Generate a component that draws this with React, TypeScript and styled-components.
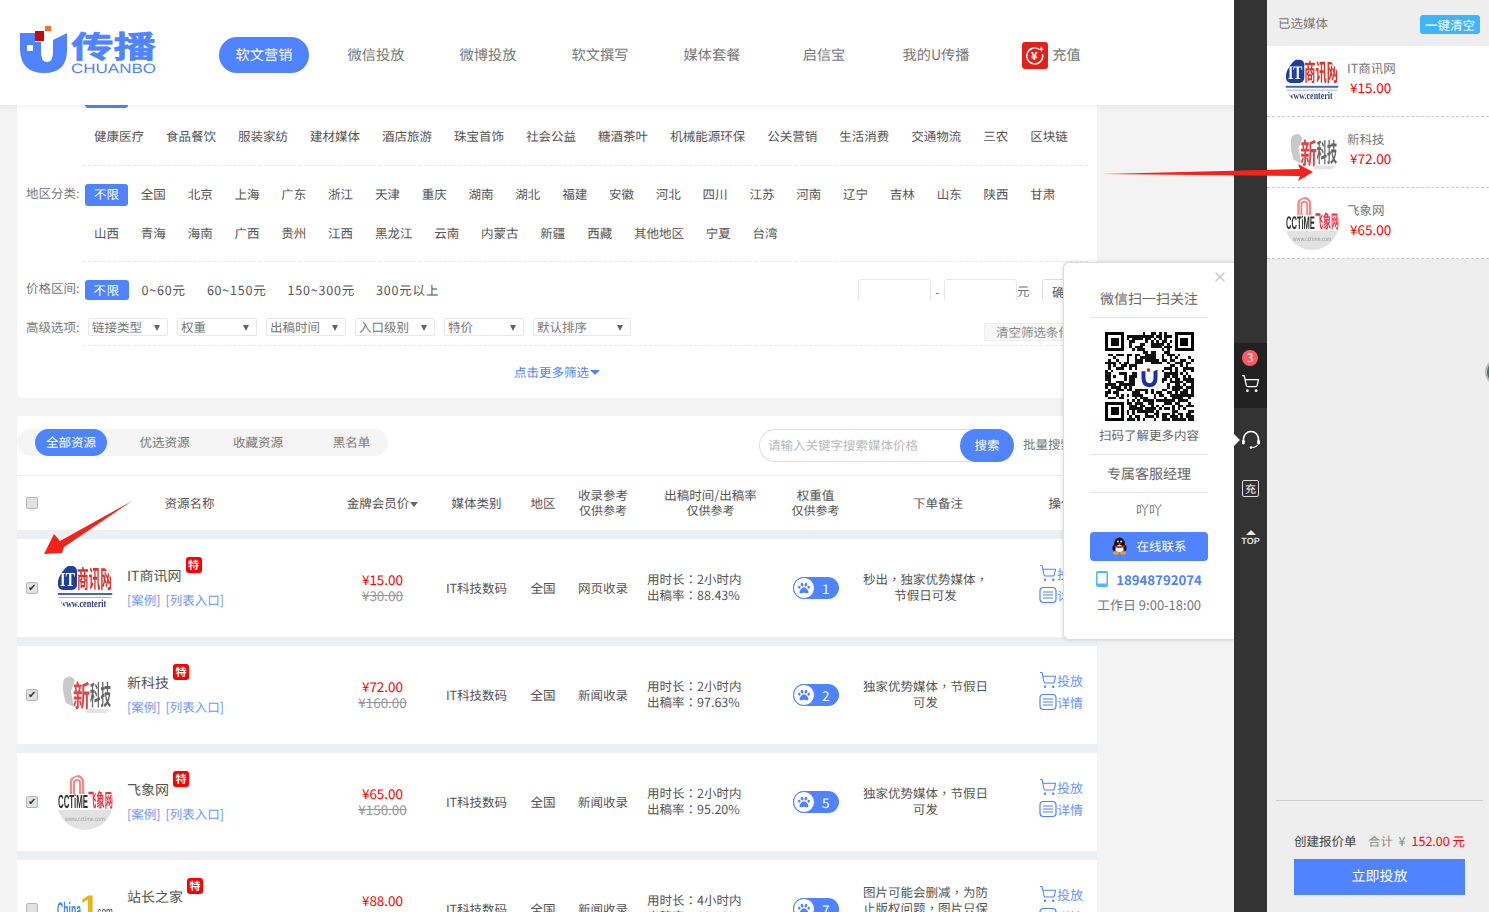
import React from "react";
import styled, { createGlobalStyle } from "styled-components";
import { ShoppingCart, X } from "lucide-react";
import { FaPaw } from "react-icons/fa";

const BLUE = "#5083ff";

const GlobalStyle = createGlobalStyle`
  html, body {
    margin: 0;
    padding: 0;
    height: 100%;
    overflow: hidden;
    background: #f3f3f4;
    font-family: "Noto Sans CJK SC", "Noto Sans", sans-serif;
    font-size: 12.5px;
    color: #555;
    text-rendering: geometricPrecision;
  }
  * { box-sizing: border-box; }
`;

const Page = styled.div`
  position: relative;
  display: flex;
  width: 1489px;
  height: 912px;
  overflow: hidden;
`;

const Main = styled.div`
  position: relative;
  width: 1234px;
  height: 912px;
  overflow: hidden;
`;

/* ---- header ---- */
const Header = styled.header`
  position: relative;
  z-index: 5;
  display: flex;
  align-items: center;
  height: 105px;
  padding-left: 20px;
  background: #fff;
  box-shadow: 0 2px 6px rgba(0, 0, 0, 0.06);
`;

const LogoSvg = styled.svg`
  flex: none;
  width: 199px;
  height: 105px;
`;

const Nav = styled.nav`
  display: flex;
  gap: 22px;
  margin-top: 5px;
`;

const NavItem = styled.a<{ $active?: boolean }>`
  display: flex;
  align-items: center;
  justify-content: center;
  gap: 4px;
  width: 90px;
  height: 36px;
  border-radius: 18px;
  font-size: 14.2px;
  color: ${(p) => (p.$active ? "#fff" : "#777")};
  background: ${(p) => (p.$active ? BLUE : "transparent")};
`;

const RechargeNav = styled(NavItem)`
  padding-left: 7px;
`;

const RechargeIcon = styled.svg`
  flex: none;
  width: 26px;
  height: 27px;
`;

/* ---- filter card ---- */
const Content = styled.div`
  width: 1080px;
  margin-left: 17px;
`;

const FilterCard = styled.section`
  height: 293px;
  background: #fff;
  border-radius: 0 0 6px 6px;
`;

const CutTag = styled.div`
  width: 43px;
  height: 3px;
  margin-left: 68px;
  background: ${BLUE};
  border-radius: 0 0 3px 3px;
`;

const FilterGroup = styled.div<{ $top: number }>`
  display: flex;
  padding-left: 9px;
  margin-top: ${(p) => p.$top}px;
`;

const FilterLabel = styled.div`
  flex: none;
  width: 59px;
  height: 18px;
  line-height: 18px;
  color: #777;
  white-space: nowrap;
`;

const Options = styled.div`
  display: flex;
  flex-wrap: wrap;
  row-gap: 17px;
  flex: 1;
`;

const Option = styled.a<{ $active?: boolean }>`
  height: 22px;
  line-height: 21px;
  padding: 0 9px;
  margin-right: 4px;
  border-radius: 3px;
  white-space: nowrap;
  color: ${(p) => (p.$active ? "#fff" : "#555")};
  background: ${(p) => (p.$active ? BLUE : "transparent")};
`;

const RegionOption = styled(Option)`
  line-height: 20px;
  margin-right: 3.8px;
`;

const Dashed = styled.div<{ $top: number }>`
  height: 1px;
  margin: ${(p) => p.$top}px 9px 0 66px;
  border-top: 1px dashed #e8e8e8;
`;

const PriceRow = styled.div`
  display: flex;
  height: 21px;
  overflow: hidden;
  margin-top: 17px;
  padding-left: 9px;
  padding-right: 7px;
`;

const PriceOption = styled(Option)`
  align-self: flex-end;
  height: 20px;
  line-height: 20px;
  letter-spacing: 0.8px;
  padding: 0 ${(p) => (p.$active ? 8.5 : 10)}px;
  margin-right: ${(p) => (p.$active ? 3 : 1)}px;
`;

const PriceSide = styled.div`
  display: flex;
  margin-left: auto;
  color: #777;
`;

const PriceInput = styled.div`
  width: 73px;
  height: 30px;
  border: 1px solid #e8e8e8;
  border-radius: 3px;
`;

const PriceSep = styled.span`
  width: 13px;
  line-height: 26px;
  text-align: center;
`;

const PriceUnit = styled.span`
  width: 25px;
  line-height: 24px;
`;

const PriceButton = styled.div`
  width: 48px;
  height: 30px;
  padding-left: 9px;
  line-height: 24px;
  color: #555;
  border: 1px solid #ddd;
  border-radius: 3px;
`;

const AdvancedRow = styled.div`
  display: flex;
  height: 18px;
  margin-top: 18px;
  padding-left: 9px;
`;

const SelectList = styled.div`
  display: flex;
  flex: 1;
  gap: 9px;
  margin-left: 3px;
`;

const SelectBox = styled.div<{ $wide?: boolean }>`
  position: relative;
  width: ${(p) => (p.$wide ? 98 : 80)}px;
  height: 18px;
  line-height: 15px;
  padding-left: 3px;
  color: #777;
  border: 1px solid #e8e8e8;
  border-radius: 2px;
  &::after {
    content: "";
    position: absolute;
    right: 7px;
    top: 6px;
    border: 3.5px solid transparent;
    border-top: 6px solid #666;
    border-bottom: 0;
  }
`;

const ClearButton = styled.div`
  height: 18px;
  margin: 5px 14px 0 0;
  padding: 0 11px;
  line-height: 16px;
  white-space: nowrap;
  color: #888;
  background: #f7f7f7;
  border: 1px solid #eee;
  border-radius: 2px;
`;

const MoreLink = styled.div`
  display: flex;
  align-items: center;
  justify-content: center;
  height: 50px;
  color: ${BLUE};
  &::after {
    content: "";
    margin: 2px 0 0 1px;
    border: 5px solid transparent;
    border-top: 5px solid ${BLUE};
    border-bottom: 0;
  }
`;

/* ---- table ---- */
const TableCard = styled.section`
  margin-top: 18px;
  background: #edf0f3;
`;

const Toolbar = styled.div`
  display: flex;
  align-items: flex-start;
  height: 60px;
  padding-top: 13px;
  background: #fff;
  border-bottom: 1px solid #eee;
`;

const Pills = styled.div`
  display: flex;
  gap: 21.5px;
  height: 27px;
  padding-left: 18px;
  background: #f5f5f5;
  border-radius: 14px;
`;

const Pill = styled.a<{ $active?: boolean }>`
  width: 72px;
  line-height: 26px;
  text-align: center;
  border-radius: 14px;
  color: ${(p) => (p.$active ? "#fff" : "#777")};
  background: ${(p) => (p.$active ? BLUE : "transparent")};
`;

const SearchBox = styled.div`
  display: flex;
  align-items: center;
  justify-content: space-between;
  width: 255px;
  height: 33px;
  margin-left: auto;
  padding: 0 0 2px 8px;
  color: #bbb;
  border: 1px solid #ddd;
  border-right: 0;
  border-radius: 17px;
`;

const SearchButton = styled.div`
  align-self: flex-start;
  width: 54px;
  height: 33px;
  margin-top: -1px;
  line-height: 31px;
  text-align: center;
  color: #fff;
  background: ${BLUE};
  border-radius: 17px;
`;

const BatchSearch = styled.div`
  width: 83px;
  padding-left: 9px;
  line-height: 30px;
  color: #777;
`;

const gridColumns = "30px 285px 101px 87px 46px 74px 128px 95px 150px 84px";

const TableHead = styled.div`
  display: grid;
  grid-template-columns: ${gridColumns};
  align-items: center;
  height: 54px;
  background: #fff;
`;

const HeadCell = styled.div<{ $shift?: number }>`
  padding-left: ${(p) => p.$shift ?? 0}px;
  text-align: center;
  white-space: nowrap;
  line-height: 16px;
  color: #555;
`;

const HeadSub = styled.div`
  font-size: 12px;
`;

const SortCaret = styled.span`
  display: inline-block;
  margin-left: 1px;
  vertical-align: 1px;
  border: 4px solid transparent;
  border-top: 5px solid #666;
  border-bottom: 0;
`;

const Row = styled.div`
  display: grid;
  grid-template-columns: ${gridColumns};
  align-items: center;
  height: 98px;
  margin-top: 9px;
  background: #fff;
`;

const Check = styled.input.attrs({ type: "checkbox" })`
  appearance: none;
  position: relative;
  justify-self: center;
  width: 12px;
  height: 12px;
  margin: 0;
  background: #e2e2e2;
  border: 1px solid #b5b5b5;
  border-radius: 2px;
  &:checked::after {
    content: "✔";
    position: absolute;
    left: 1px;
    top: -3px;
    font-size: 10px;
    line-height: 16px;
    color: #333;
  }
`;

const ResourceCell = styled.div`
  display: flex;
  align-items: center;
  gap: 14px;
  padding-left: 10px;
`;

const LogoImage = styled.svg<{ $size: number }>`
  flex: none;
  width: ${(p) => p.$size}px;
  height: ${(p) => p.$size}px;
  border-radius: 50%;
  filter: blur(0.5px);
`;

const ResourceInfo = styled.div`
  display: flex;
  flex-direction: column;
  gap: 6px;
  line-height: 18px;
`;

const NameWrap = styled.div`
  position: relative;
  align-self: flex-start;
  font-size: 14px;
  color: #555;
`;

const SpecialBadge = styled.span`
  position: absolute;
  left: calc(100% + 4px);
  top: -10px;
  width: 16px;
  height: 16px;
  line-height: 16px;
  font-size: 11px;
  font-weight: 700;
  text-align: center;
  color: #fff;
  background: #f00;
  border-radius: 3px;
`;

const LinkRow = styled.div`
  display: flex;
  gap: 5px;
  color: #6c97ff;
`;

const PriceCell = styled.div`
  padding-bottom: 2px;
  text-align: center;
  line-height: 16px;
`;

const PriceNow = styled.div`
  font-size: 13.5px;
  color: #f00;
`;

const PriceOld = styled.div`
  font-size: 13.5px;
  color: #999;
  text-decoration: line-through;
`;

const TextCell = styled.div`
  padding-bottom: 2px;
  text-align: center;
`;

const TimeCell = styled.div`
  padding: 0 0 2px 7px;
  line-height: 16px;
  white-space: nowrap;
`;

const WeightPill = styled.div`
  display: flex;
  align-items: center;
  justify-self: center;
  width: 46px;
  height: 22px;
  padding-right: 9px;
  color: #fff;
  font-size: 13.5px;
  background: ${BLUE};
  border-radius: 11px;
`;

const PawCircle = styled.span`
  display: flex;
  align-items: center;
  justify-content: center;
  width: 22px;
  height: 22px;
  margin-right: auto;
  color: ${BLUE};
  background: #fff;
  border: 1px solid ${BLUE};
  border-radius: 50%;
`;

const NoteCell = styled.div`
  width: 127px;
  margin-left: -1px;
  padding-bottom: 2px;
  text-align: center;
  line-height: 16px;
`;

// the full-width comma and colon sit mid-cell in the reference
const Punct = styled.span`
  font-family: "Noto Sans CJK TC", sans-serif;
`;

const OpCell = styled.div`
  display: flex;
  flex-direction: column;
  gap: 4px;
  padding: 0 0 8px 26px;
`;

const OpLink = styled.a`
  display: flex;
  align-items: center;
  height: 18px;
  color: #6c97ff;
  font-size: 13px;
  white-space: nowrap;
  svg {
    flex: none;
    width: 18px;
    height: 18px;
  }
`;

/* ---- popover ---- */
const Popover = styled.aside`
  position: absolute;
  z-index: 6;
  left: 1063px;
  top: 262px;
  display: flex;
  flex-direction: column;
  align-items: center;
  width: 171px;
  height: 378px;
  padding: 18px 26px 0;
  background: #fff;
  border: 1px solid #ddd;
  border-right: 0;
  border-radius: 6px 0 0 6px;
  box-shadow: 0 0 4px rgba(0, 0, 0, 0.15);
`;

const CloseButton = styled.span`
  position: absolute;
  right: 6px;
  top: 6px;
  color: #ccc;
  display: flex;
`;

const PopTitle = styled.div<{ $h: number }>`
  flex: none;
  width: 100%;
  height: ${(p) => p.$h}px;
  line-height: ${(p) => p.$h}px;
  font-size: 14px;
  text-align: center;
  white-space: nowrap;
  color: #666;
  border-bottom: 1px solid #e5e5e5;
`;

const QrSvg = styled.svg`
  flex: none;
  width: 99px;
  height: 99px;
  margin-top: 9px;
`;

const PopCaption = styled.div`
  flex: none;
  height: 29px;
  width: 100%;
  line-height: 18px;
  text-align: center;
  white-space: nowrap;
  color: #666;
  border-bottom: 1px solid #e5e5e5;
`;

const PopName = styled.div`
  flex: none;
  height: 34px;
  line-height: 34px;
  font-size: 13px;
  color: #777;
`;

const ContactButton = styled.div`
  display: flex;
  align-items: center;
  justify-content: center;
  gap: 8px;
  flex: none;
  width: 100%;
  height: 29px;
  margin-top: 5px;
  padding-bottom: 2px;
  color: #fff;
  background: ${BLUE};
  border-radius: 4px;
`;

const PhoneLine = styled.div`
  display: flex;
  align-items: center;
  gap: 8px;
  flex: none;
  height: 36px;
  font-size: 13.2px;
  font-weight: 700;
  color: ${BLUE};
`;

const WorkTime = styled.div`
  line-height: 16px;
  font-size: 13px;
  white-space: nowrap;
  color: #777;
`;

/* ---- dark rail ---- */
const Rail = styled.div`
  display: flex;
  flex-direction: column;
  align-items: center;
  flex: none;
  width: 33px;
  height: 912px;
  padding-top: 343px;
  color: #fff;
  background: #333;
`;

const CartBlock = styled.div`
  position: relative;
  display: flex;
  flex-direction: column;
  align-items: center;
  width: 100%;
  height: 65px;
  padding-top: 31px;
  background: #222;
`;

const CountBadge = styled.span`
  position: absolute;
  top: 7px;
  left: 8px;
  width: 16px;
  height: 16px;
  line-height: 16px;
  font-size: 12px;
  text-align: center;
  border-radius: 50%;
  background: #ff5a5f;
`;

const HeadsetItem = styled.div`
  position: relative;
  display: flex;
  align-items: center;
  justify-content: center;
  width: 100%;
  height: 64px;
  &::before {
    content: "";
    position: absolute;
    left: 0;
    top: 26px;
    border: 6px solid transparent;
    border-left: 6px solid #fff;
    border-right: 0;
  }
`;

const ChargeItem = styled.div`
  display: flex;
  align-items: center;
  justify-content: center;
  width: 17px;
  height: 17px;
  margin-top: 8px;
  font-size: 11px;
  border: 1px solid #ddd;
  border-radius: 2px;
`;

const TopItem = styled.div`
  display: flex;
  flex-direction: column;
  align-items: center;
  gap: 2px;
  margin-top: 33px;
  font-family: "Liberation Sans", sans-serif;
  font-size: 9px;
  font-weight: 700;
  line-height: 9px;
  color: #ddd;
  &::before {
    content: "";
    border: 5px solid transparent;
    border-bottom: 5px solid #eee;
    border-top: 0;
  }
`;

/* ---- right panel ---- */
const Panel = styled.aside`
  position: relative;
  display: flex;
  flex-direction: column;
  flex: none;
  width: 222px;
  height: 912px;
  background: #eee;
`;

const PanelHead = styled.div`
  display: flex;
  align-items: center;
  justify-content: space-between;
  height: 46px;
  padding: 0 9px 2px 11px;
  color: #777;
`;

const ClearAll = styled.span`
  width: 60px;
  height: 19px;
  margin-top: 4px;
  line-height: 19px;
  text-align: center;
  color: #fff;
  background: #3fb4ff;
  border-radius: 3px;
`;

const PanelItem = styled.div`
  display: flex;
  align-items: center;
  gap: 8px;
  height: 71px;
  padding-left: 18px;
  background: #fff;
  border-bottom: 1px dashed #ccc;
`;

const PanelText = styled.div`
  padding-bottom: 7px;
`;

const PanelName = styled.div`
  line-height: 18px;
  color: #777;
`;

const PanelPrice = styled.div`
  margin-top: 1px;
  padding-left: 3px;
  line-height: 18px;
  font-size: 13.5px;
  color: #f00;
`;

const PanelFooter = styled.div`
  margin: auto 6px 17px 9px;
  padding: 31px 18px 0;
  border-top: 1px solid #ccc;
`;

const Summary = styled.div`
  display: flex;
  height: 27px;
  white-space: nowrap;
  color: #888;
  line-height: 18px;
`;

const SummaryLabel = styled.span`
  width: 74px;
  color: #444;
`;

const SummaryTotal = styled.span`
  margin-left: 6px;
  color: #f00;
`;

const SubmitButton = styled.div`
  height: 36px;
  width: 171px;
  line-height: 35px;
  text-align: center;
  font-size: 14px;
  color: #fff;
  background: ${BLUE};
`;

const EdgeCircle = styled.span`
  position: absolute;
  left: 218px;
  top: 358px;
  width: 28px;
  height: 28px;
  background: #17896c;
  border: 2px solid #bbb;
  border-radius: 50%;
`;

const ArrowLayer = styled.svg`
  position: absolute;
  z-index: 9;
  left: 0;
  top: 0;
  width: 1489px;
  height: 912px;
  pointer-events: none;
`;

/* ---- drawings ---- */
const BrandLogo = () => (
  <LogoSvg viewBox="0 0 199 105">
    <path
      d="M0 33H15V42H21V52Q21 62 27 62T33 52V40L47 33V50Q47 73 24 73T0 50Z"
      fill="#5083ff"
    />
    <rect x="7" y="45" width="6" height="6" fill="#fff" />
    <rect x="15" y="31" width="9" height="10" fill="#c40a0a" />
    <rect x="25" y="26" width="6" height="5" fill="#f0701e" />
    <text
      x="51"
      y="58"
      fill="#5083ff"
      stroke="#5083ff"
      strokeWidth="0.6"
      fontSize="31"
      fontWeight="700"
      textLength="85"
      lengthAdjust="spacingAndGlyphs"
    >
      传播
    </text>
    <text
      x="51"
      y="73"
      fill="#5083ff"
      fontFamily="Liberation Sans"
      fontSize="13.5"
      textLength="85"
      lengthAdjust="spacingAndGlyphs"
    >
      CHUANBO
    </text>
  </LogoSvg>
);

const Recharge = () => (
  <RechargeIcon viewBox="0 0 26 27">
    <rect width="26" height="27" rx="3" fill="#e0231a" />
    <path
      d="M17.5 7.5A8 8 0 1 0 20.5 12"
      fill="none"
      stroke="#fff"
      strokeWidth="1.4"
    />
    <path d="M19 4l1 2.5 2 .5-2 1-.5 2-1-2-2-.5 2-1z" fill="#fff" />
    <text x="9" y="18" fill="#fff" fontSize="11" fontWeight="700">
      ¥
    </text>
  </RechargeIcon>
);

const ItLogo = ({ size }: { size: number }) => (
  <LogoImage $size={size} viewBox="0 0 56 56">
    <rect width="56" height="56" fill="#fff" />
    <rect x="1" y="6" width="19" height="24" rx="5" fill="#1f3f9e" />
    <text x="3" y="26" fill="#fff" fontSize="20" fontWeight="700" fontFamily="Liberation Serif" textLength="15" lengthAdjust="spacingAndGlyphs">
      IT
    </text>
    <text x="20" y="28" fill="#d9352e" fontSize="25" fontWeight="700" textLength="35" lengthAdjust="spacingAndGlyphs">
      商讯网
    </text>
    <rect x="0" y="33" width="56" height="2" fill="#4466b5" />
    <rect x="0" y="37" width="56" height="1" fill="#9fb2dd" />
    <text x="3" y="47" fill="#2d3f80" fontSize="11" fontWeight="700" fontFamily="Liberation Serif" textLength="52" lengthAdjust="spacingAndGlyphs">
      www.centerit.c
    </text>
  </LogoImage>
);

const TechLogo = ({ size }: { size: number }) => (
  <LogoImage $size={size} viewBox="0 0 56 56">
    <rect width="56" height="56" fill="#fff" />
    <path d="M7 12Q14 6 18 14L14 24L17 40L9 36Q4 22 7 12Z" fill="#c9c9c9" />
    <text x="16" y="40" fill="#d9474a" fontSize="30" fontWeight="700" textLength="17" lengthAdjust="spacingAndGlyphs">
      新
    </text>
    <text x="33" y="38" fill="#666" fontSize="27" fontWeight="700" textLength="21" lengthAdjust="spacingAndGlyphs">
      科技
    </text>
    <rect x="30" y="42" width="22" height="4" fill="#e3e3e3" />
  </LogoImage>
);

const CctimeLogo = ({ size }: { size: number }) => (
  <LogoImage $size={size} viewBox="0 0 56 56">
    <rect width="56" height="56" fill="#fff" />
    <rect x="0" y="36" width="56" height="20" fill="#e2e2e2" />
    <path d="M14 20V8A6 6 0 0 1 26 8V20" fill="none" stroke="#ef8d8d" strokeWidth="2.5" />
    <path d="M17 20V9A3 3 0 0 1 23 9V20" fill="none" stroke="#ef8d8d" strokeWidth="2" />
    <text x="1" y="34" fill="#333" fontSize="19" fontWeight="700" fontFamily="Liberation Sans" textLength="30" lengthAdjust="spacingAndGlyphs">
      CCTiME
    </text>
    <text x="31" y="33" fill="#ee3344" fontSize="19" fontWeight="700" textLength="25" lengthAdjust="spacingAndGlyphs">
      飞象网
    </text>
    <text x="8" y="47" fill="#999" fontSize="6" textLength="40" lengthAdjust="spacingAndGlyphs">
      www.cctime.com
    </text>
  </LogoImage>
);

const ChinaLogo = ({ size }: { size: number }) => (
  <LogoImage $size={size} viewBox="0 0 56 56">
    <rect width="56" height="56" fill="#fff" />
    <text x="0" y="36" fill="#3a8be8" fontSize="21" fontWeight="700" fontFamily="Liberation Sans" textLength="24" lengthAdjust="spacingAndGlyphs">
      China
    </text>
    <text x="23" y="38" fill="#e6b420" fontSize="34" fontWeight="700" fontFamily="Liberation Sans">
      1
    </text>
    <text x="38" y="36" fill="#555" fontSize="15" fontFamily="Liberation Sans" textLength="18" lengthAdjust="spacingAndGlyphs">
      .com
    </text>
  </LogoImage>
);

const QR_SIZE = 33;

const isFinder = (x: number, y: number) =>
  (x < 8 && y < 8) || (x >= QR_SIZE - 8 && y < 8) || (x < 8 && y >= QR_SIZE - 8);

// pseudo random modules, stable between renders
const qrModules = () => {
  const cells: [number, number][] = [];
  let seed = 20747;
  for (let y = 0; y < QR_SIZE; y++) {
    for (let x = 0; x < QR_SIZE; x++) {
      seed = (seed * 1103515245 + 12345) & 0x7fffffff;
      if (!isFinder(x, y) && (seed >> 16) % 100 < 52) cells.push([x, y]);
    }
  }
  return cells;
};

const Finder = ({ x, y }: { x: number; y: number }) => (
  <g>
    <rect x={x} y={y} width="7" height="7" fill="#000" />
    <rect x={x + 1} y={y + 1} width="5" height="5" fill="#fff" />
    <rect x={x + 2} y={y + 2} width="3" height="3" fill="#000" />
  </g>
);

const QrCode = () => (
  <QrSvg viewBox="-2 -2 37 37" shapeRendering="crispEdges">
    <rect x="-2" y="-2" width="37" height="37" fill="#fff" />
    {qrModules().map(([x, y]) => (
      <rect key={`${x}-${y}`} x={x} y={y} width="1" height="1" fill="#111" />
    ))}
    <Finder x={0} y={0} />
    <Finder x={QR_SIZE - 7} y={0} />
    <Finder x={0} y={QR_SIZE - 7} />
    <rect x="12" y="12" width="9" height="9" rx="1" fill="#fff" />
    <g shapeRendering="auto">
      <path
        d="M13.5 14.5h1.5v2.5q0 2 1.5 2t1.5-2v-2.500l1.500-.5v3q0 3.500-3 3.500t-3-3.500z"
        fill="#1a2fa8"
      />
      <rect x="15.500" y="13.500" width="1.200" height="1.200" fill="#d02020" />
    </g>
  </QrSvg>
);

const DetailIcon = () => (
  <svg viewBox="0 0 18 18" fill="none" stroke={BLUE} strokeWidth="1.2">
    <rect x="1" y="1.500" width="16" height="15" rx="3.500" />
    <path d="M4 6h10M4 9h10M4 12h10" />
  </svg>
);

const Penguin = () => (
  <svg width="17" height="18" viewBox="0 0 17 18">
    <ellipse cx="8.500" cy="7.500" rx="5.500" ry="7" fill="#111" />
    <ellipse cx="3" cy="11" rx="1.500" ry="3" fill="#111" />
    <ellipse cx="14" cy="11" rx="1.500" ry="3" fill="#111" />
    <ellipse cx="8.500" cy="11.500" rx="4" ry="3.500" fill="#fff" />
    <path d="M3.500 8Q8.500 10.500 13.500 8V10Q8.500 12 3.500 10z" fill="#d81e1e" />
    <circle cx="6.800" cy="4.500" r="1" fill="#fff" />
    <circle cx="10.200" cy="4.500" r="1" fill="#fff" />
    <path d="M7 6.500h3L8.500 8z" fill="#f0a020" />
    <ellipse cx="5" cy="16" rx="3" ry="1.500" fill="#f0a020" />
    <ellipse cx="12" cy="16" rx="3" ry="1.500" fill="#f0a020" />
  </svg>
);

const PhoneIcon = () => (
  <svg width="12" height="16" viewBox="0 0 12 16">
    <rect width="12" height="16" rx="2" fill="#4db8ff" />
    <rect x="1.500" y="2" width="9" height="10.500" fill="#fff" />
  </svg>
);

const Headset = () => (
  <svg width="20" height="20" viewBox="0 0 20 20" fill="none" stroke="#fff">
    <path d="M2.500 11V9A7.500 7.500 0 0 1 17.500 9V11" strokeWidth="1.600" />
    <rect x="1" y="10" width="2.800" height="4.500" rx="1.200" fill="#fff" strokeWidth="0" />
    <rect x="16.200" y="10" width="2.800" height="4.500" rx="1.200" fill="#fff" strokeWidth="0" />
    <path d="M16.500 15Q15 17.500 11 17.500" strokeWidth="1.200" />
    <circle cx="10" cy="17.500" r="1.300" fill="#fff" strokeWidth="0" />
  </svg>
);

/* ---- data ---- */
const categories = ["健康医疗", "食品餐饮", "服装家纺", "建材媒体", "酒店旅游", "珠宝首饰", "社会公益", "糖酒茶叶", "机械能源环保", "公关营销", "生活消费", "交通物流", "三农", "区块链"];
const regions = ["全国", "北京", "上海", "广东", "浙江", "天津", "重庆", "湖南", "湖北", "福建", "安徽", "河北", "四川", "江苏", "河南", "辽宁", "吉林", "山东", "陕西", "甘肃", "山西", "青海", "海南", "广西", "贵州", "江西", "黑龙江", "云南", "内蒙古", "新疆", "西藏", "其他地区", "宁夏", "台湾"];
const navItems = ["软文营销", "微信投放", "微博投放", "软文撰写", "媒体套餐", "启信宝", "我的U传播"];
const advanced = ["链接类型", "权重", "出稿时间", "入口级别", "特价"];

const rows = [
  { name: "IT商讯网", Logo: ItLogo, now: "15.00", old: "30.00", kind: "网页收录", hours: "2", rate: "88.43%", weight: 1, note: "秒出，独家优势媒体，节假日可发", checked: true },
  { name: "新科技", Logo: TechLogo, now: "72.00", old: "160.00", kind: "新闻收录", hours: "2", rate: "97.63%", weight: 2, note: "独家优势媒体，节假日可发", checked: true },
  { name: "飞象网", Logo: CctimeLogo, now: "65.00", old: "150.00", kind: "新闻收录", hours: "2", rate: "95.20%", weight: 5, note: "独家优势媒体，节假日可发", checked: true },
  { name: "站长之家", Logo: ChinaLogo, now: "88.00", old: "180.00", kind: "新闻收录", hours: "4", rate: "90.10%", weight: 7, note: "图片可能会删减，为防止版权问题，图片只保留一张", checked: false },
];

// wrap full-width punctuation so that it takes the mid-cell glyph
const withPunct = (text: string) =>
  text.split(/([，：])/).map((part, i) =>
    part === "，" || part === "：" ? <Punct key={i}>{part}</Punct> : part
  );

const App: React.FC = () => {
  return (
    <Page>
      <GlobalStyle />
      <Main>
        <Header>
          <BrandLogo />
          <Nav>
            {navItems.map((item, i) => (
              <NavItem key={item} $active={i === 0}>
                {item}
              </NavItem>
            ))}
            <RechargeNav>
              <Recharge />
              充值
            </RechargeNav>
          </Nav>
        </Header>

        <Content>
          <FilterCard>
            <CutTag />
            <FilterGroup $top={17}>
              <FilterLabel />
              <Options>
                {categories.map((c) => (
                  <Option key={c}>{c}</Option>
                ))}
              </Options>
            </FilterGroup>
            <Dashed $top={18} />
            <FilterGroup $top={18}>
              <FilterLabel>地区分类:</FilterLabel>
              <Options>
                <RegionOption $active>不限</RegionOption>
                {regions.map((r) => (
                  <RegionOption key={r}>{r}</RegionOption>
                ))}
              </Options>
            </FilterGroup>
            <Dashed $top={16} />
            <PriceRow>
              <FilterLabel>价格区间:</FilterLabel>
              <PriceOption $active>不限</PriceOption>
              <PriceOption>0~60元</PriceOption>
              <PriceOption>60~150元</PriceOption>
              <PriceOption>150~300元</PriceOption>
              <PriceOption>300元以上</PriceOption>
              <PriceSide>
                <PriceInput />
                <PriceSep>-</PriceSep>
                <PriceInput />
                <PriceUnit>元</PriceUnit>
                <PriceButton>确定</PriceButton>
              </PriceSide>
            </PriceRow>
            <AdvancedRow>
              <FilterLabel>高级选项:</FilterLabel>
              <SelectList>
                {advanced.map((a) => (
                  <SelectBox key={a}>{a}</SelectBox>
                ))}
                <SelectBox $wide>默认排序</SelectBox>
              </SelectList>
              <ClearButton>清空筛选条件</ClearButton>
            </AdvancedRow>
            <Dashed $top={9} />
            <MoreLink>点击更多筛选</MoreLink>
          </FilterCard>

          <TableCard>
            <Toolbar>
              <Pills>
                <Pill $active>全部资源</Pill>
                <Pill>优选资源</Pill>
                <Pill>收藏资源</Pill>
                <Pill>黑名单</Pill>
              </Pills>
              <SearchBox>
                请输入关键字搜索媒体价格
                <SearchButton>搜索</SearchButton>
              </SearchBox>
              <BatchSearch>批量搜索</BatchSearch>
            </Toolbar>
            <TableHead>
              <Check />
              <HeadCell>资源名称</HeadCell>
              <HeadCell>
                金牌会员价
                <SortCaret />
              </HeadCell>
              <HeadCell>媒体类别</HeadCell>
              <HeadCell>地区</HeadCell>
              <HeadCell>
                收录参考
                <HeadSub>仅供参考</HeadSub>
              </HeadCell>
              <HeadCell $shift={13}>
                出稿时间/出稿率
                <HeadSub>仅供参考</HeadSub>
              </HeadCell>
              <HeadCell>
                权重值
                <HeadSub>仅供参考</HeadSub>
              </HeadCell>
              <HeadCell>下单备注</HeadCell>
              <HeadCell $shift={12}>操作</HeadCell>
            </TableHead>
            {rows.map((row) => (
              <Row key={row.name}>
                <Check defaultChecked={row.checked} />
                <ResourceCell>
                  <row.Logo size={56} />
                  <ResourceInfo>
                    <NameWrap>
                      {row.name}
                      <SpecialBadge>特</SpecialBadge>
                    </NameWrap>
                    <LinkRow>
                      <span>[案例]</span>
                      <span>[列表入口]</span>
                    </LinkRow>
                  </ResourceInfo>
                </ResourceCell>
                <PriceCell>
                  <PriceNow>¥{row.now}</PriceNow>
                  <PriceOld>¥{row.old}</PriceOld>
                </PriceCell>
                <TextCell>IT科技数码</TextCell>
                <TextCell>全国</TextCell>
                <TextCell>{row.kind}</TextCell>
                <TimeCell>
                  {withPunct(`用时长：${row.hours}小时内`)}
                  <br />
                  {withPunct(`出稿率：${row.rate}`)}
                </TimeCell>
                <WeightPill>
                  <PawCircle>
                    <FaPaw size={12} />
                  </PawCircle>
                  {row.weight}
                </WeightPill>
                <NoteCell>{withPunct(row.note)}</NoteCell>
                <OpCell>
                  <OpLink>
                    <ShoppingCart strokeWidth={1.4} color={BLUE} />
                    投放
                  </OpLink>
                  <OpLink>
                    <DetailIcon />
                    详情
                  </OpLink>
                </OpCell>
              </Row>
            ))}
          </TableCard>
        </Content>

        <Popover>
          <CloseButton>
            <X size={16} strokeWidth={2.4} />
          </CloseButton>
          <PopTitle $h={37}>微信扫一扫关注</PopTitle>
          <QrCode />
          <PopCaption>扫码了解更多内容</PopCaption>
          <PopTitle $h={38}>专属客服经理</PopTitle>
          <PopName>吖吖</PopName>
          <ContactButton>
            <Penguin />
            在线联系
          </ContactButton>
          <PhoneLine>
            <PhoneIcon />
            18948792074
          </PhoneLine>
          <WorkTime>工作日 9:00-18:00</WorkTime>
        </Popover>
      </Main>

      <Rail>
        <CartBlock>
          <CountBadge>3</CountBadge>
          <ShoppingCart size={19} strokeWidth={1.6} />
        </CartBlock>
        <HeadsetItem>
          <Headset />
        </HeadsetItem>
        <ChargeItem>充</ChargeItem>
        <TopItem>TOP</TopItem>
      </Rail>

      <Panel>
        <PanelHead>
          已选媒体
          <ClearAll>一键清空</ClearAll>
        </PanelHead>
        {rows.slice(0, 3).map((row) => (
          <PanelItem key={row.name}>
            <row.Logo size={54} />
            <PanelText>
              <PanelName>{row.name}</PanelName>
              <PanelPrice>¥{row.now}</PanelPrice>
            </PanelText>
          </PanelItem>
        ))}
        <PanelFooter>
          <Summary>
            <SummaryLabel>创建报价单</SummaryLabel>
            合计&nbsp;&nbsp;¥
            <SummaryTotal>152.00 元</SummaryTotal>
          </Summary>
          <SubmitButton>立即投放</SubmitButton>
        </PanelFooter>
        <EdgeCircle />
      </Panel>

      <ArrowLayer viewBox="0 0 1489 912">
        <polygon
          points="44,554 54,534 60,541 132,501 64,547 62,553"
          fill="#f5221b"
        />
        <polygon
          points="1103,174 1300,169 1298,164 1313,172 1298,181 1300,176"
          fill="#f5221b"
        />
      </ArrowLayer>
    </Page>
  );
};

export default App;
